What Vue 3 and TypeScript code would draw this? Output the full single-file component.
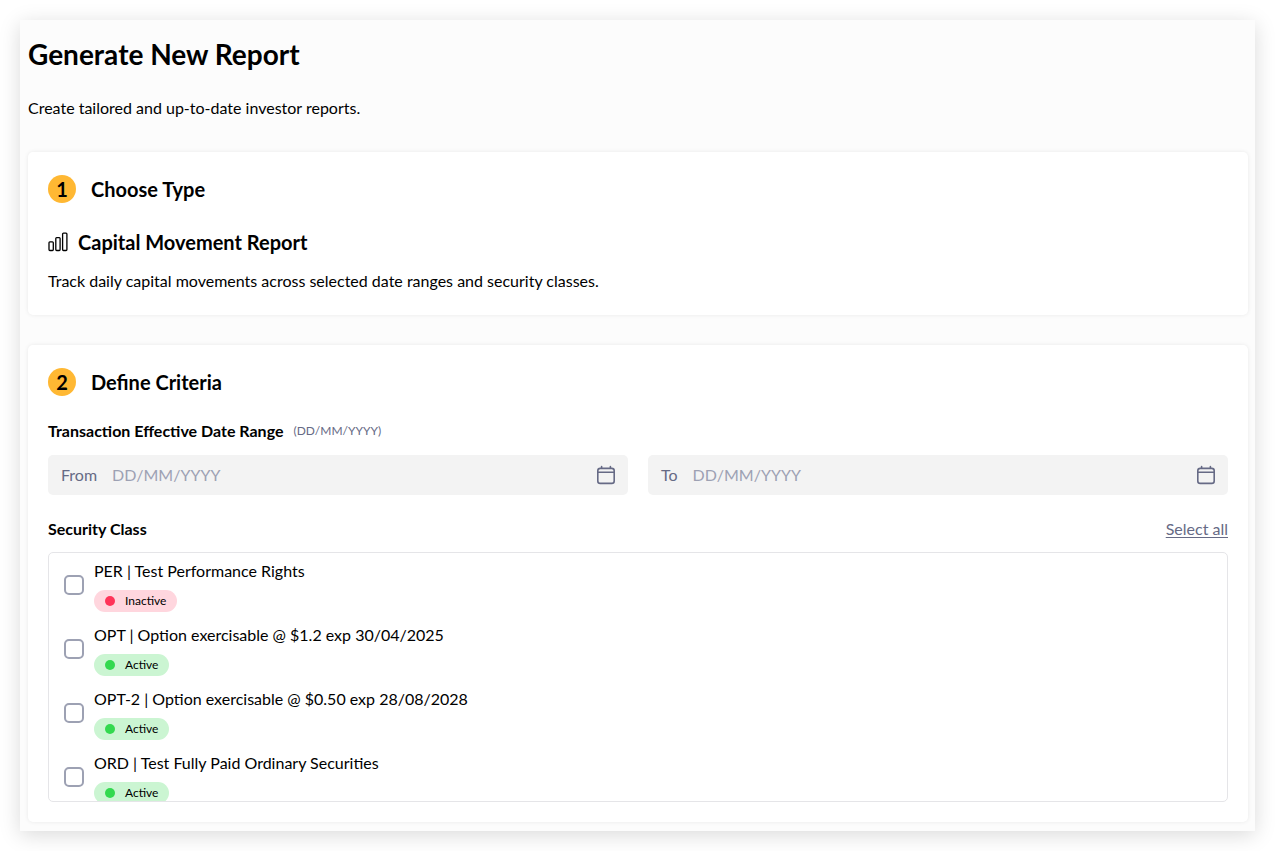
<script setup lang="ts">
import { ref } from 'vue'

interface SecurityClass {
  code: string
  name: string
  active: boolean
}

const securities: SecurityClass[] = [
  { code: 'PER', name: 'Test Performance Rights', active: false },
  { code: 'OPT', name: 'Option exercisable @ $1.2 exp 30/04/2025', active: true },
  { code: 'OPT-2', name: 'Option exercisable @ $0.50 exp 28/08/2028', active: true },
  { code: 'ORD', name: 'Test Fully Paid Ordinary Securities', active: true },
]

const dateFields = [
  { id: 'date-from', label: 'From' },
  { id: 'date-to', label: 'To' },
]

const dates = ref<Record<string, string>>({ 'date-from': '', 'date-to': '' })
const selected = ref<string[]>([])

function selectAll(): void {
  selected.value = securities.map((item) => item.code)
}
</script>

<template>
  <main class="panel">
    <header class="intro">
      <h1>Generate New Report</h1>
      <p>Create tailored and up-to-date investor reports.</p>
    </header>

    <section class="card">
      <div class="step">
        <span class="step-number">1</span>
        <h2>Choose Type</h2>
      </div>
      <div class="report-type">
        <svg class="bars" viewBox="0 0 20 20" aria-hidden="true">
          <rect x="1" y="9.8" width="4.3" height="8.7" rx="0.9" />
          <rect x="7.8" y="5.6" width="4.3" height="12.9" rx="0.9" />
          <rect x="14.6" y="1.2" width="4.3" height="17.3" rx="0.9" />
        </svg>
        <h3>Capital Movement Report</h3>
      </div>
      <p class="description">Track daily capital movements across selected date ranges and security classes.</p>
    </section>

    <section class="card">
      <div class="step">
        <span class="step-number">2</span>
        <h2>Define Criteria</h2>
      </div>

      <div class="range-title">
        <h4>Transaction Effective Date Range</h4>
        <span class="hint">(DD/MM/YYYY)</span>
      </div>
      <div class="range">
        <div v-for="field in dateFields" :key="field.id" class="date-field">
          <label :for="field.id">{{ field.label }}</label>
          <input :id="field.id" v-model="dates[field.id]" type="text" placeholder="DD/MM/YYYY" />
          <button type="button" class="calendar" :aria-label="`${field.label} date`">
            <svg viewBox="0 0 20 20" aria-hidden="true">
              <rect x="1.8" y="3.4" width="16.4" height="15" rx="2.4" />
              <path d="M2 7.2H18M5.6 3.2V1.6M14.4 3.2V1.6" />
            </svg>
          </button>
        </div>
      </div>

      <div class="class-title">
        <h4>Security Class</h4>
        <button type="button" class="select-all" @click="selectAll">Select all</button>
      </div>
      <ul class="class-list">
        <li v-for="item in securities" :key="item.code">
          <input :id="`class-${item.code}`" v-model="selected" type="checkbox" :value="item.code" />
          <div class="class-info">
            <label :for="`class-${item.code}`">{{ item.code }} | {{ item.name }}</label>
            <span class="badge" :class="item.active ? 'active' : 'inactive'">
              <span class="dot"></span>{{ item.active ? 'Active' : 'Inactive' }}
            </span>
          </div>
        </li>
      </ul>
    </section>
  </main>
</template>

<style>
body {
  background: #fff;
}
</style>

<style scoped>
.panel,
.panel * {
  box-sizing: border-box;
}

.panel {
  margin: 20px;
  padding: 16px 7px 9px 8px;
  background: #fcfcfc;
  box-shadow: 0 4px 20px rgba(0, 0, 0, 0.15);
  color: #000;
  font: 400 16px/24px Lato, sans-serif;
}

h1,
h2,
h3,
h4,
p,
ul {
  margin: 0;
  padding: 0;
}

h1 {
  font-size: 28px;
  font-weight: 700;
  line-height: 36px;
}

.intro p {
  margin: 24px 0 32px;
}

h2,
h3 {
  font-size: 20px;
  font-weight: 700;
  line-height: 26px;
}

h4 {
  font-size: 16px;
  font-weight: 700;
  line-height: 24px;
}

.card {
  padding: 20px;
  border-radius: 5px;
  background: #fff;
  box-shadow: 0 0 4px rgba(0, 0, 0, 0.08);
}

.card + .card {
  margin-top: 30px;
}

.step {
  display: flex;
  align-items: center;
  gap: 15px;
  height: 34px;
}

.step-number {
  width: 28px;
  height: 28px;
  border-radius: 50%;
  background: #ffb833;
  font-size: 20px;
  font-weight: 700;
  line-height: 28px;
  text-align: center;
}

.report-type {
  display: flex;
  align-items: center;
  gap: 10px;
  margin: 23px 0 14px;
}

.description {
  padding-bottom: 2px;
}

.bars {
  width: 20px;
  height: 20px;
  fill: none;
  stroke: #000;
  stroke-width: 1.3;
}

.range-title {
  display: flex;
  align-items: center;
  gap: 10px;
  margin: 20px 0 12px;
}

.hint {
  color: #666a85;
  font-size: 12px;
}

.range {
  display: grid;
  grid-template-columns: 1fr 1fr;
  gap: 20px;
}

.date-field {
  display: flex;
  align-items: center;
  height: 40px;
  padding: 0 12px 0 13px;
  border-radius: 5px;
  background: #f3f3f3;
}

.date-field label {
  margin-right: 15px;
  color: #666a85;
}

.date-field input {
  flex: 1;
  min-width: 0;
  padding: 0;
  border: 0;
  outline: 0;
  background: transparent;
  color: #000;
  font: inherit;
}

.date-field input::placeholder {
  color: #9da1b3;
  opacity: 1;
}

.calendar {
  display: flex;
  padding: 0;
  border: 0;
  background: transparent;
  cursor: pointer;
}

.calendar svg {
  width: 20px;
  height: 20px;
  fill: none;
  stroke: #666a85;
  stroke-width: 1.6;
  stroke-linecap: round;
}

.class-title {
  display: flex;
  align-items: center;
  justify-content: space-between;
  margin: 22px 0 11px;
}

.select-all {
  padding: 0;
  border: 0;
  background: transparent;
  color: #666a85;
  font: inherit;
  text-decoration: underline;
  text-underline-offset: 2px;
  cursor: pointer;
}

.class-list {
  height: 250px;
  overflow-y: auto;
  scrollbar-width: none;
  border: 1px solid #e5e5e8;
  border-radius: 5px;
  list-style: none;
}

.class-list li {
  display: flex;
  align-items: center;
  gap: 10px;
  height: 64px;
  padding: 0 15px;
}

.class-list input {
  flex: none;
  width: 20px;
  height: 20px;
  margin: 0;
  appearance: none;
  border: 2px solid #9da1b3;
  border-radius: 5px;
  background: #fff;
}

.class-list input:checked {
  background: #666a85;
}

.class-info {
  display: flex;
  flex-direction: column;
  align-items: flex-start;
  gap: 7px;
  padding-top: 1px;
}

.badge {
  display: flex;
  align-items: center;
  gap: 10px;
  height: 22px;
  padding: 0 11px;
  border-radius: 11px;
  font-size: 12px;
}

.dot {
  width: 10px;
  height: 10px;
  border-radius: 50%;
}

.inactive {
  background: #ffd6de;
}

.inactive .dot {
  background: #ff3358;
}

.active {
  background: #cbf5d2;
}

.active .dot {
  background: #33d94f;
}
</style>
